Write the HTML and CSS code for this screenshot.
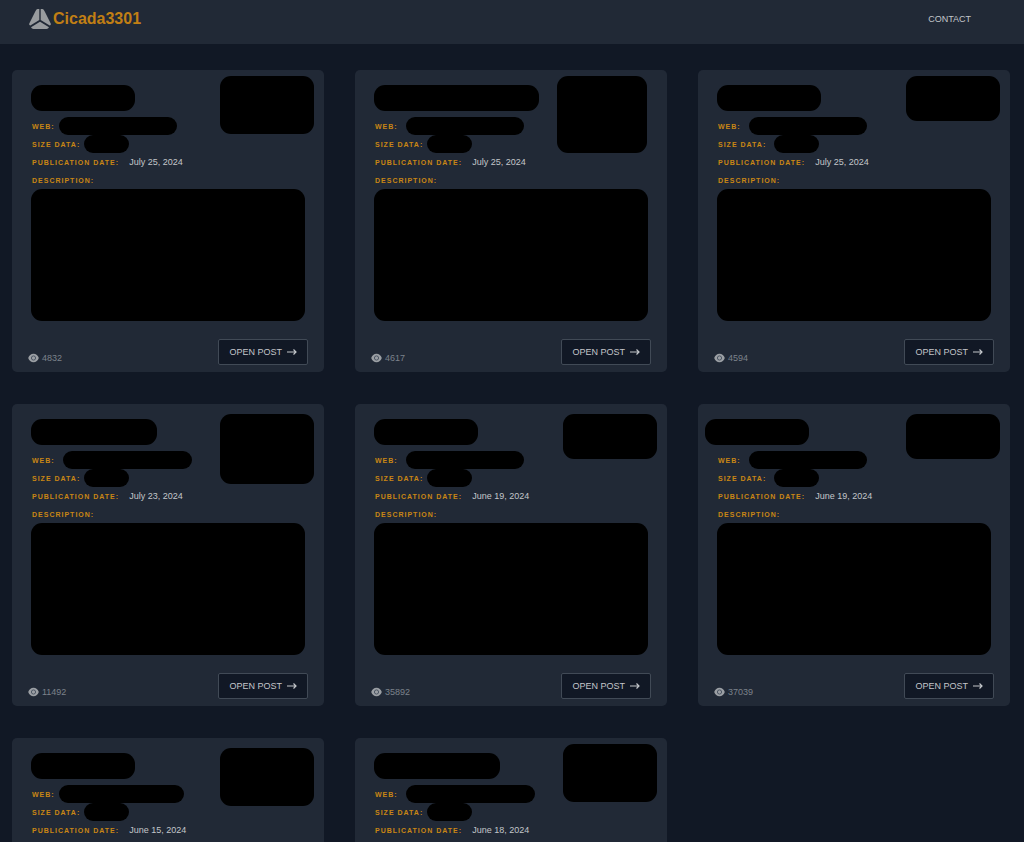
FILE: index.html
```html
<!DOCTYPE html>
<html lang="en">
<head>
    <meta charset="UTF-8">
    <meta name="viewport" content="width=device-width, initial-scale=1.0">
    <title>Cicada3301</title>
    <link rel="stylesheet" href="styles.css">
</head>
<body>
    <svg class="sprite" aria-hidden="true">
        <symbol id="eye" viewBox="0 0 11 10">
            <path fill="currentColor" d="M5.500 .7C3 .7 1 2.400 .2 5 1 7.600 3 9.300 5.500 9.300S10 7.600 10.800 5C10 2.400 8 .7 5.500 .7z"/>
            <circle cx="5.500" cy="5" r="2.100" fill="none" stroke="#4b5563" stroke-width="1"/>
        </symbol>
        <symbol id="arrow" viewBox="0 0 10 8">
            <path fill="none" stroke="currentColor" stroke-width="1.200" d="M0 4h9M6.500 1.500L9 4 6.500 6.500"/>
        </symbol>
    </svg>

    <header class="navbar">
        <a class="brand" href="#">
            <svg class="brand-logo" viewBox="0 0 22 20" aria-hidden="true">
                <path d="M10.300 0v11L1.300 16.600Q-.4 16 .4 14.200L6.400 2.200Q7.500 0 8.600 0z"/>
                <path d="M11.700 0v11l9 5.600q1.700-.6 .9-2.400L15.600 2.200Q14.500 0 13.400 0z"/>
                <path d="M11 12.700L20 18.200Q19.200 20 17.600 20H4.400Q2.800 20 2 18.200z"/>
            </svg>
            <span>Cicada3301</span>
        </a>
        <nav>
            <a class="nav-link" href="#">CONTACT</a>
        </nav>
    </header>

    <main class="posts">
        <article class="card">
            <div class="card-head">
                <div class="facts">
                    <div class="mask title"></div>
                    <p><span class="label">WEB:</span><span class="mask web tight"></span></p>
                    <p><span class="label">SIZE DATA:</span><span class="mask size tight"></span></p>
                    <p><span class="label">PUBLICATION DATE:</span><time>July 25, 2024</time></p>
                    <p><span class="label">DESCRIPTION:</span></p>
                </div>
                <div class="mask logo"></div>
            </div>
            <div class="mask description"></div>
            <div class="card-foot">
                <span class="views"><svg><use href="#eye"/></svg>4832</span>
                <button class="open" type="button">OPEN POST <svg><use href="#arrow"/></svg></button>
            </div>
        </article>

        <article class="card">
            <div class="card-head">
                <div class="facts">
                    <div class="mask title title-xl"></div>
                    <p><span class="label">WEB:</span><span class="mask web"></span></p>
                    <p><span class="label">SIZE DATA:</span><span class="mask size tight"></span></p>
                    <p><span class="label">PUBLICATION DATE:</span><time>July 25, 2024</time></p>
                    <p><span class="label">DESCRIPTION:</span></p>
                </div>
                <div class="mask logo logo-square"></div>
            </div>
            <div class="mask description"></div>
            <div class="card-foot">
                <span class="views"><svg><use href="#eye"/></svg>4617</span>
                <button class="open" type="button">OPEN POST <svg><use href="#arrow"/></svg></button>
            </div>
        </article>

        <article class="card">
            <div class="card-head">
                <div class="facts">
                    <div class="mask title"></div>
                    <p><span class="label">WEB:</span><span class="mask web"></span></p>
                    <p><span class="label">SIZE DATA:</span><span class="mask size"></span></p>
                    <p><span class="label">PUBLICATION DATE:</span><time>July 25, 2024</time></p>
                    <p><span class="label">DESCRIPTION:</span></p>
                </div>
                <div class="mask logo logo-short"></div>
            </div>
            <div class="mask description"></div>
            <div class="card-foot">
                <span class="views"><svg><use href="#eye"/></svg>4594</span>
                <button class="open" type="button">OPEN POST <svg><use href="#arrow"/></svg></button>
            </div>
        </article>

        <article class="card">
            <div class="card-head">
                <div class="facts">
                    <div class="mask title title-lg"></div>
                    <p><span class="label">WEB:</span><span class="mask web web-lg"></span></p>
                    <p><span class="label">SIZE DATA:</span><span class="mask size tight"></span></p>
                    <p><span class="label">PUBLICATION DATE:</span><time>July 23, 2024</time></p>
                    <p><span class="label">DESCRIPTION:</span></p>
                </div>
                <div class="mask logo logo-tall logo-low"></div>
            </div>
            <div class="mask description"></div>
            <div class="card-foot">
                <span class="views"><svg><use href="#eye"/></svg>11492</span>
                <button class="open" type="button">OPEN POST <svg><use href="#arrow"/></svg></button>
            </div>
        </article>

        <article class="card">
            <div class="card-head">
                <div class="facts">
                    <div class="mask title"></div>
                    <p><span class="label">WEB:</span><span class="mask web"></span></p>
                    <p><span class="label">SIZE DATA:</span><span class="mask size tight"></span></p>
                    <p><span class="label">PUBLICATION DATE:</span><time>June 19, 2024</time></p>
                    <p><span class="label">DESCRIPTION:</span></p>
                </div>
                <div class="mask logo logo-short logo-low"></div>
            </div>
            <div class="mask description"></div>
            <div class="card-foot">
                <span class="views"><svg><use href="#eye"/></svg>35892</span>
                <button class="open" type="button">OPEN POST <svg><use href="#arrow"/></svg></button>
            </div>
        </article>

        <article class="card">
            <div class="card-head">
                <div class="facts">
                    <div class="mask title title-out"></div>
                    <p><span class="label">WEB:</span><span class="mask web"></span></p>
                    <p><span class="label">SIZE DATA:</span><span class="mask size"></span></p>
                    <p><span class="label">PUBLICATION DATE:</span><time>June 19, 2024</time></p>
                    <p><span class="label">DESCRIPTION:</span></p>
                </div>
                <div class="mask logo logo-short logo-low"></div>
            </div>
            <div class="mask description"></div>
            <div class="card-foot">
                <span class="views"><svg><use href="#eye"/></svg>37039</span>
                <button class="open" type="button">OPEN POST <svg><use href="#arrow"/></svg></button>
            </div>
        </article>

        <article class="card">
            <div class="card-head">
                <div class="facts">
                    <div class="mask title"></div>
                    <p><span class="label">WEB:</span><span class="mask web web-md tight"></span></p>
                    <p><span class="label">SIZE DATA:</span><span class="mask size tight"></span></p>
                    <p><span class="label">PUBLICATION DATE:</span><time>June 15, 2024</time></p>
                </div>
                <div class="mask logo logo-low"></div>
            </div>
        </article>

        <article class="card">
            <div class="card-head">
                <div class="facts">
                    <div class="mask title title-lg"></div>
                    <p><span class="label">WEB:</span><span class="mask web web-lg"></span></p>
                    <p><span class="label">SIZE DATA:</span><span class="mask size tight"></span></p>
                    <p><span class="label">PUBLICATION DATE:</span><time>June 18, 2024</time></p>
                </div>
                <div class="mask logo"></div>
            </div>
        </article>
    </main>
</body>
</html>
```
FILE: styles.css
```css
* {
    box-sizing: border-box;
}

body {
    margin: 0;
    height: 100vh;
    overflow: hidden;
    background: #111825;
    color: #c3c6ca;
    font-family: "Liberation Sans", Arial, sans-serif;
    font-size: 9px;
}

a {
    color: inherit;
    text-decoration: none;
}

p {
    margin: 0;
}

.sprite {
    display: none;
}

/* top bar */
.navbar {
    display: flex;
    align-items: center;
    justify-content: space-between;
    height: 44px;
    padding: 0 53px 6px 29px;
    background: #212936;
}

.brand {
    display: flex;
    align-items: center;
    gap: 2px;
    color: #c17f14;
    font-size: 16px;
    font-weight: bold;
}

.brand-logo {
    width: 22px;
    height: 20px;
    fill: #989b9e;
}

.nav-link {
    display: block;
}

/* post grid */
.posts {
    display: grid;
    grid-template-columns: repeat(3, 1fr);
    gap: 32px 31px;
    padding: 26px 14px 26px 12px;
}

.card {
    min-height: 302px;
    background: #212936;
    border-radius: 5px;
}

.card-head {
    display: flex;
    align-items: flex-start;
    justify-content: space-between;
    padding-left: 20px;
}

.facts {
    padding-top: 15px;
}

.facts p {
    display: flex;
    align-items: center;
    height: 18px;
    white-space: nowrap;
}

.label {
    color: #c98614;
    font-size: 7px;
    font-weight: bold;
    letter-spacing: 1px;
}

time {
    margin-left: 10px;
}

/* blacked out parts */
.mask {
    background: #000;
    border-radius: 11px;
}

.title {
    width: 104px;
    height: 26px;
    margin: 0 0 6px -1px;
}

.title-lg {
    width: 126px;
}

.title-xl {
    width: 165px;
}

.title-out {
    margin-left: -13px;
}

.web,
.size {
    height: 18px;
    margin-left: 8px;
    border-radius: 9px;
}

.web {
    width: 118px;
}

.web-md {
    width: 125px;
}

.web-lg {
    width: 129px;
}

.size {
    width: 45px;
}

.tight {
    margin-left: 4px;
}

.logo {
    width: 94px;
    height: 58px;
    margin: 6px 10px 0 0;
}

.logo-square {
    width: 90px;
    height: 77px;
    margin-right: 20px;
}

.logo-short {
    height: 45px;
}

.logo-tall {
    height: 70px;
}

.logo-low {
    margin-top: 10px;
}

.description {
    height: 132px;
    margin: 0 19px;
}

/* bottom of the card */
.card-foot {
    display: flex;
    align-items: flex-end;
    justify-content: space-between;
    padding: 18px 16px 7px;
}

.views {
    display: flex;
    align-items: center;
    gap: 3px;
    padding-bottom: 2px;
    color: #7c828b;
}

.views svg {
    width: 11px;
    height: 10px;
    color: #9b9fa4;
}

.open {
    display: flex;
    align-items: center;
    gap: 5px;
    height: 26px;
    padding: 0 10px;
    background: #111825;
    border: 1px solid #414a56;
    border-radius: 2px;
    color: #c3c6ca;
    font: inherit;
    cursor: pointer;
}

.open svg {
    width: 10px;
    height: 8px;
}
```
